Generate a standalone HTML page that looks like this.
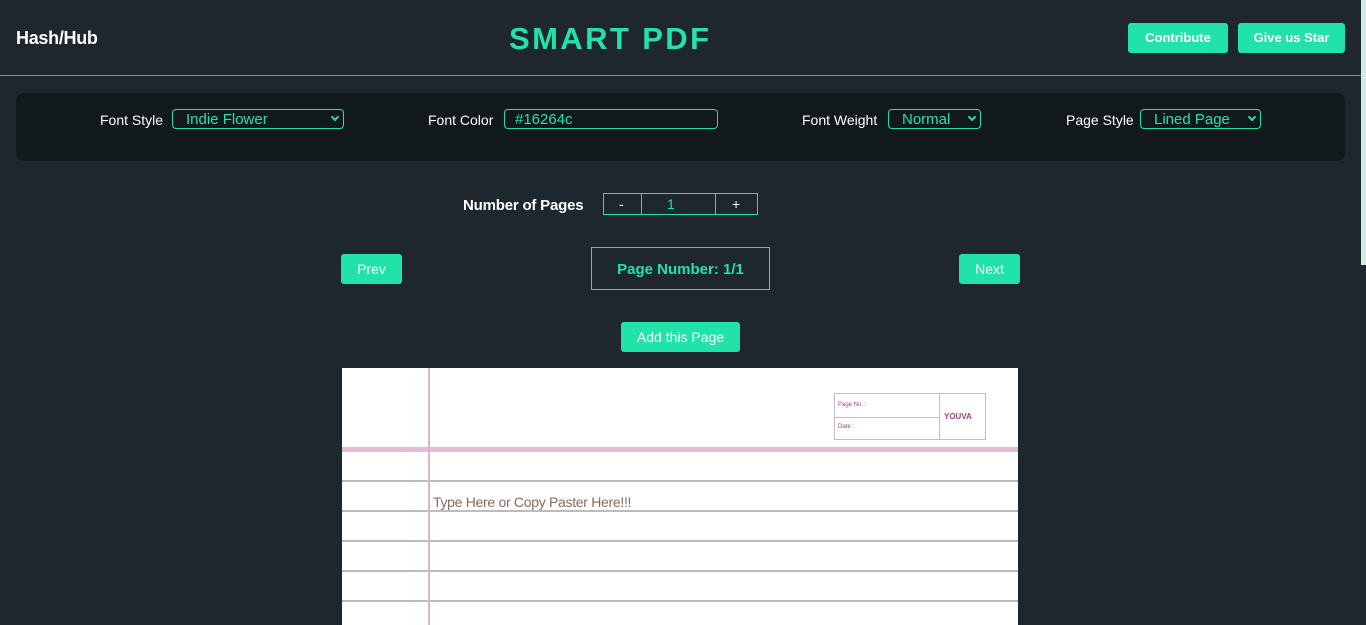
<!DOCTYPE html>
<html><head><style>
*{margin:0;padding:0;box-sizing:border-box}
body{width:1366px;height:625px;overflow:hidden;background:#1e272d;font-family:"Liberation Sans",sans-serif;position:relative}
.a{position:absolute}
.btn{position:absolute;background:#21e3a9;color:#fff;border-radius:3px;text-align:center;font-size:14px}
.lbl{position:absolute;color:#fff;font-size:14px;top:112px}
.sel{position:absolute;top:109px;height:20px;border:1px solid #21e3a9;border-radius:4px;color:#21e3a9;font-size:15px;line-height:19px;padding-left:13px}
.sel .ch{position:absolute;right:5px;top:4px;width:6px;height:6px;border-right:2px solid #21e3a9;border-bottom:2px solid #21e3a9;transform:rotate(45deg)}
.gl{position:absolute;left:0;width:676px;height:2px;background:#bcbcc0}
</style></head><body>
<div class="a" style="left:16px;top:28px;color:#fff;font-weight:bold;font-size:18px;letter-spacing:-0.3px">Hash/Hub</div>
<div class="a" style="left:509px;top:21px;color:#21e3a9;font-weight:bold;font-size:31px;letter-spacing:2.4px">SMART PDF</div>
<div class="btn" style="left:1128px;top:23px;width:100px;height:30px;line-height:30px;font-weight:bold;font-size:13px">Contribute</div>
<div class="btn" style="left:1238px;top:23px;width:107px;height:30px;line-height:30px;font-weight:bold;font-size:13px">Give us Star</div>
<div class="a" style="left:0;top:75px;width:1361px;height:1px;background:#8a8f91"></div>
<div class="a" style="left:1361px;top:0;width:5px;height:265px;background:#cfeee4"></div>
<div class="a" style="left:16px;top:93px;width:1329px;height:68px;background:#12191c;border-radius:8px"></div>
<div class="lbl" style="left:100px">Font Style</div>
<div class="sel" style="left:172px;width:172px">Indie Flower<span class="ch"></span></div>
<div class="lbl" style="left:428px">Font Color</div>
<div class="sel" style="left:504px;width:214px;padding-left:10px">#16264c</div>
<div class="lbl" style="left:802px">Font Weight</div>
<div class="sel" style="left:888px;width:93px">Normal<span class="ch"></span></div>
<div class="lbl" style="left:1066px">Page Style</div>
<div class="sel" style="left:1140px;width:121px">Lined Page<span class="ch"></span></div>
<div class="a" style="left:463px;top:197px;color:#fff;font-weight:bold;font-size:15px;letter-spacing:-0.2px">Number of Pages</div>
<div class="a" style="left:603px;top:193px;width:155px;height:22px;border:1px solid #21e3a9"></div>
<div class="a" style="left:641px;top:193px;width:1px;height:22px;background:#21e3a9"></div>
<div class="a" style="left:715px;top:193px;width:1px;height:22px;background:#21e3a9"></div>
<div class="a" style="left:619px;top:196px;color:#fff;font-size:14px">-</div>
<div class="a" style="left:667px;top:196px;color:#21e3a9;font-size:14px">1</div>
<div class="a" style="left:732px;top:196px;color:#fff;font-size:14px">+</div>
<div class="btn" style="left:341px;top:254px;width:61px;height:30px;line-height:30px">Prev</div>
<div class="a" style="left:591px;top:247px;width:179px;height:43px;border:1px solid #21e3a9;color:#21e3a9;font-weight:bold;font-size:15px;text-align:center;line-height:43px">Page Number: 1/1</div>
<div class="btn" style="left:959px;top:254px;width:61px;height:30px;line-height:30px">Next</div>
<div class="btn" style="left:621px;top:322px;width:119px;height:30px;line-height:30px">Add this Page</div>
<div class="a" style="left:342px;top:368px;width:676px;height:257px;background:#fff;overflow:hidden">
 <div class="a" style="left:492px;top:25px;width:152px;height:47px;border:1px solid #c8b8c4"></div>
 <div class="a" style="left:597px;top:25px;width:1px;height:47px;background:#c8b8c4"></div>
 <div class="a" style="left:492px;top:49px;width:105px;height:1px;background:#c8b8c4"></div>
 <div class="a" style="left:496px;top:34px;font-size:6px;color:#a04080">Page No. :</div>
 <div class="a" style="left:496px;top:56px;font-size:6px;color:#a04080">Date :</div>
 <div class="a" style="left:602px;top:44px;font-size:8px;font-weight:bold;color:#a04080">YOUVA</div>
 <div class="a" style="left:0;top:79px;width:676px;height:5px;background:#e4bcd4"></div>
 <div class="gl" style="top:112px"></div>
 <div class="gl" style="top:142px"></div>
 <div class="gl" style="top:172px"></div>
 <div class="gl" style="top:202px"></div>
 <div class="gl" style="top:232px"></div>
 <div class="a" style="left:86px;top:0;width:2px;height:257px;background:#dcb4cc"></div>
 <div class="a" style="left:91px;top:126px;font-size:14px;color:#8a6a5a;letter-spacing:-0.3px">Type Here or Copy Paster Here!!!</div>
</div>
</body></html>
